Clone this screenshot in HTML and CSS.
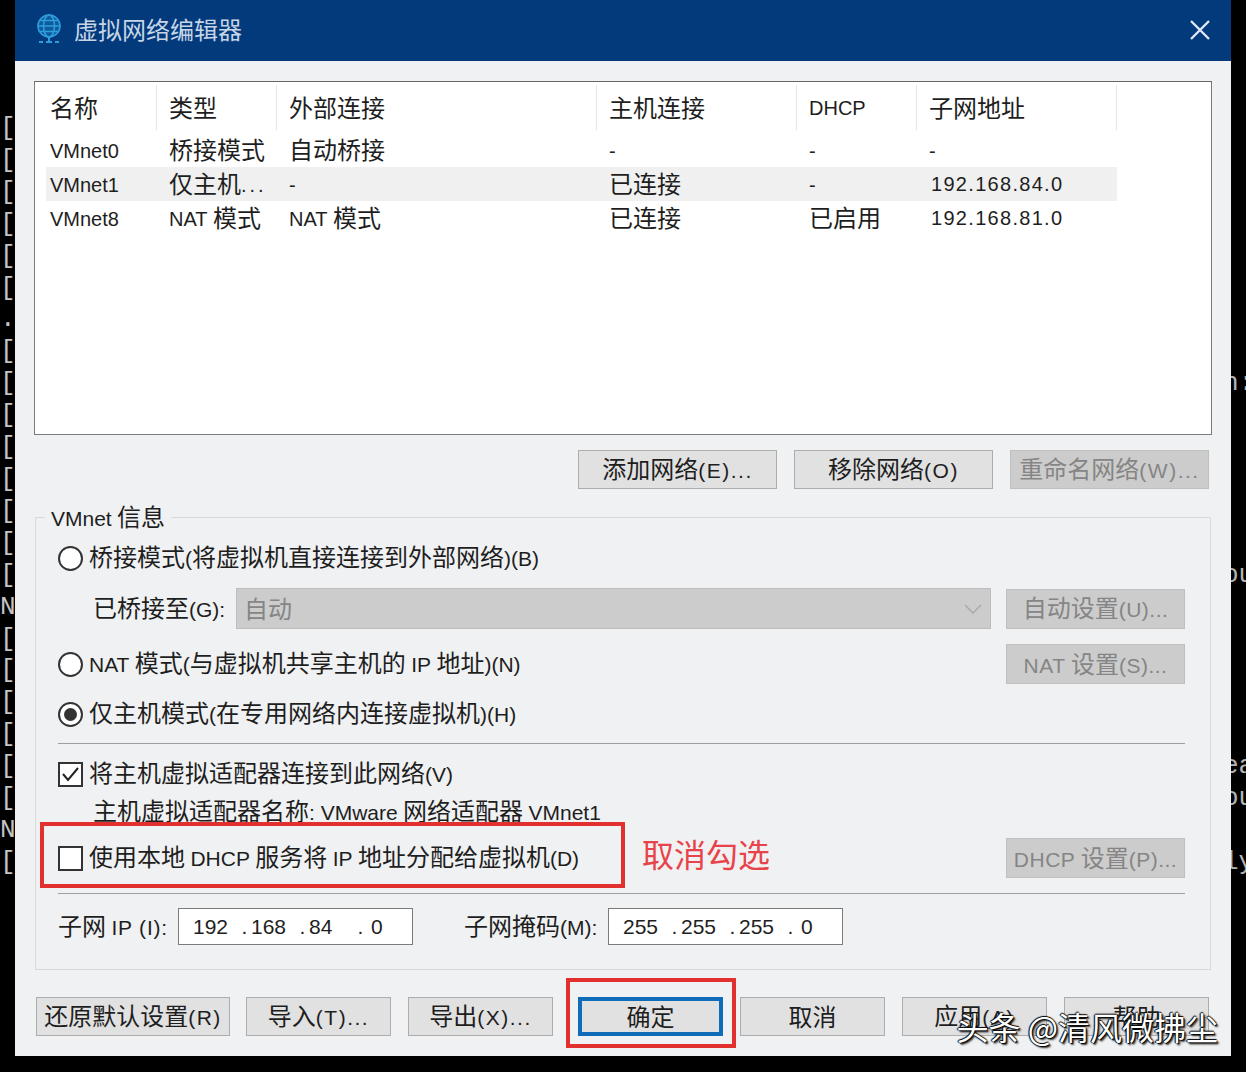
FILE: index.html
```html
<!DOCTYPE html>
<html lang="zh-CN">
<head>
    <meta charset="UTF-8" />
    <title>虚拟网络编辑器</title>
    <link rel="stylesheet" href="styles.css">
</head>
<body>
    <div class="screen">
        <pre class="term term-left">[
[
[
[
[
[
.
[
[
[
[
[
[
[
[
N
[
[
[
[
[
[
N
[</pre>

        <div class="dialog">
            <header class="titlebar">
                <svg class="app-icon" width="26" height="32" viewBox="0 0 26 32" fill="none" stroke="#2f9ddb" stroke-width="1.6">
                    <circle cx="13" cy="12" r="11" fill="#0f5c9c"/>
                    <ellipse cx="13" cy="12" rx="5.5" ry="11"/>
                    <path d="M2 12h22M4 6.5h18M4 17.5h18"/>
                    <path d="M13 23v4M3 28h4M10 28h6M19 28h4" stroke-width="2"/>
                </svg>
                <span class="title">虚拟网络编辑器</span>
                <svg class="close" width="20" height="20" viewBox="0 0 20 20" stroke="#dfe9f2" stroke-width="2.4">
                    <path d="M1 1l18 18M19 1L1 19"/>
                </svg>
            </header>

            <div class="content">
                <div class="listbox">
                    <div class="lv-head">
                        <div class="lv-th first">名称</div>
                        <div class="lv-th">类型</div>
                        <div class="lv-th">外部连接</div>
                        <div class="lv-th">主机连接</div>
                        <div class="lv-th"><span class="en">DHCP</span></div>
                        <div class="lv-th">子网地址</div>
                    </div>
                    <div class="lv-row">
                        <div class="first"><span class="en">VMnet0</span></div>
                        <div>桥接模式</div>
                        <div>自动桥接</div>
                        <div><span class="en">-</span></div>
                        <div><span class="en">-</span></div>
                        <div><span class="en">-</span></div>
                    </div>
                    <div class="lv-row selected">
                        <div class="first"><span class="en">VMnet1</span></div>
                        <div>仅主机<span class="en dots">...</span></div>
                        <div><span class="en">-</span></div>
                        <div>已连接</div>
                        <div><span class="en">-</span></div>
                        <div><span class="en ip">192.168.84.0</span></div>
                    </div>
                    <div class="lv-row">
                        <div class="first"><span class="en">VMnet8</span></div>
                        <div><span class="en">NAT</span> 模式</div>
                        <div><span class="en">NAT</span> 模式</div>
                        <div>已连接</div>
                        <div>已启用</div>
                        <div><span class="en ip">192.168.81.0</span></div>
                    </div>
                </div>

                <div class="net-actions">
                    <button class="btn">添加网络<span class="en">(E)...</span></button>
                    <button class="btn">移除网络<span class="en">(O)</span></button>
                    <button class="btn" disabled>重命名网络<span class="en">(W)...</span></button>
                </div>

                <div class="group">
                    <div class="legend"><span class="en">VMnet</span> 信息</div>

                    <div class="row row-bridge">
                        <span class="radio"></span>
                        <span class="txt">桥接模式<span class="en">(</span>将虚拟机直接连接到外部网络<span class="en">)(B)</span></span>
                    </div>
                    <div class="row row-bridged-to">
                        <span class="txt field-label">已桥接至<span class="en">(G):</span></span>
                        <div class="select">
                            <span>自动</span>
                            <svg width="18" height="10" viewBox="0 0 18 10" fill="none" stroke="#a8a8a8" stroke-width="1.400"><path d="M1 1l8 8 8-8"/></svg>
                        </div>
                        <button class="btn side-btn" disabled>自动设置<span class="en">(U)...</span></button>
                    </div>
                    <div class="row row-nat">
                        <span class="radio"></span>
                        <span class="txt grow"><span class="en">NAT</span> 模式<span class="en">(</span>与虚拟机共享主机的 <span class="en">IP</span> 地址<span class="en">)(N)</span></span>
                        <button class="btn side-btn" disabled><span class="en">NAT</span> 设置<span class="en">(S)...</span></button>
                    </div>
                    <div class="row row-host">
                        <span class="radio checked"></span>
                        <span class="txt">仅主机模式<span class="en">(</span>在专用网络内连接虚拟机<span class="en">)(H)</span></span>
                    </div>

                    <div class="sep sep-a"></div>

                    <div class="row row-adapter">
                        <span class="check">
                            <svg width="21" height="21" viewBox="0 0 21 21" fill="none" stroke="#222" stroke-width="2"><path d="M3 10l5 6 10-12"/></svg>
                        </span>
                        <span class="txt">将主机虚拟适配器连接到此网络<span class="en">(V)</span></span>
                    </div>
                    <div class="row row-adapter-name">
                        <span class="txt">主机虚拟适配器名称<span class="en">: VMware</span> 网络适配器 <span class="en">VMnet1</span></span>
                    </div>
                    <div class="row row-dhcp">
                        <span class="check"></span>
                        <span class="txt grow">使用本地 <span class="en">DHCP</span> 服务将 <span class="en">IP</span> 地址分配给虚拟机<span class="en">(D)</span></span>
                        <button class="btn side-btn" disabled><span class="en">DHCP</span> 设置<span class="en">(P)...</span></button>
                    </div>

                    <div class="sep sep-b"></div>

                    <div class="row row-subnet">
                        <span class="txt subnet-label">子网 <span class="en">IP (I):</span></span>
                        <div class="ip-input"><span>192</span><i>.</i><span>168</span><i>.</i><span>84</span><i>.</i><span>0</span></div>
                        <span class="txt subnet-label mask-label">子网掩码<span class="en">(M):</span></span>
                        <div class="ip-input"><span>255</span><i>.</i><span>255</span><i>.</i><span>255</span><i>.</i><span>0</span></div>
                    </div>
                </div>

                <div class="footer">
                    <button class="btn reset-btn">还原默认设置<span class="en">(R)</span></button>
                    <button class="btn">导入<span class="en">(T)...</span></button>
                    <button class="btn">导出<span class="en">(X)...</span></button>
                    <button class="btn primary">确定</button>
                    <button class="btn">取消</button>
                    <button class="btn">应用<span class="en">(A)</span></button>
                    <button class="btn">帮助</button>
                </div>
            </div>

            <!-- annotations drawn on top of the dialog -->
            <div class="mark mark-dhcp"></div>
            <div class="mark-text">取消勾选</div>
            <div class="mark mark-ok"></div>
            <div class="watermark">头条 @清风微拂尘</div>
        </div>

        <div class="term term-right"><pre>








n:





ou





ea
ou

ly</pre></div>
    </div>
</body>
</html>
```

FILE: styles.css
```css
* {
    margin: 0;
    padding: 0;
    box-sizing: border-box;
}

html, body {
    background-color: #000;
}

body {
    font-family: "Noto Sans CJK SC", "Liberation Sans", sans-serif;
    font-size: 24px;
    line-height: 1.2;
    color: #1e1e1e;
}

.en {
    font-family: "Liberation Sans", "Noto Sans CJK SC", sans-serif;
    font-size: 21px;
}

.txt {
    padding-bottom: 2px;
}

.screen {
    display: flex;
    width: 1246px;
    height: 1072px;
    overflow: hidden;
}

/* Terminal text showing behind the dialog */
.term {
    width: 15px;
    flex-shrink: 0;
    overflow: hidden;
    padding-top: 113px;
    font-family: "Liberation Mono", monospace;
    font-size: 26px;
    line-height: 31.9px;
    color: #c4c4c4;
}

.term-right {
    color: #b4b4b4;
}

.term-right pre {
    margin-left: -8px;
    font: inherit;
}

.dialog {
    position: relative;
    width: 1216px;
    height: 1056px;
    flex-shrink: 0;
    background-color: #f0f1f2;
}

.titlebar {
    display: flex;
    align-items: center;
    height: 61px;
    padding: 0 21px 1px 21px;
    background-color: #033a7c;
}

.app-icon {
    flex-shrink: 0;
}

.title {
    flex: 1;
    margin-left: 12px;
    padding-bottom: 1px;
    color: #c6d6e6;
}

.content {
    padding: 20px 19px 0;
}

/* Network list */
.listbox {
    height: 354px;
    padding-left: 11px;
    background-color: #fff;
    border: 1px solid #7b7b7b;
    border-top-color: #666;
}

.listbox .en {
    font-size: 20px;
    vertical-align: 1px;
}

.lv-head,
.lv-row {
    display: grid;
    grid-template-columns: 111px 120px 320px 200px 120px 200px;
    width: 1071px;
}

.lv-head {
    height: 51px;
    padding-top: 3px;
}

.lv-th {
    display: flex;
    align-items: center;
    height: 45px;
    padding-left: 12px;
    border-right: 1px solid #e6e6e6;
}

.lv-row {
    align-items: center;
    height: 34px;
    padding-bottom: 2px;
}

.lv-row > div {
    padding-left: 12px;
    white-space: nowrap;
}

.lv-th.first,
.lv-row > div.first {
    padding-left: 4px;
}

.lv-row.selected {
    background-color: #f0f0f0;
}

.listbox .dots {
    letter-spacing: 3px;
}

.listbox .ip {
    margin-left: 2px;
    letter-spacing: 1.300px;
    vertical-align: 2px;
}

/* Buttons */
.btn {
    width: 199px;
    height: 39px;
    padding-bottom: 2px;
    font-family: inherit;
    font-size: 24px;
    line-height: 1;
    white-space: nowrap;
    color: #1e1e1e;
    background-color: #e1e1e1;
    border: 1px solid #adadad;
}

.btn .en {
    letter-spacing: 1.500px;
}

.btn:disabled {
    color: #858585;
    background-color: #cccccc;
    border-color: #bfbfbf;
}

.net-actions {
    display: flex;
    justify-content: flex-end;
    gap: 17px;
    margin-top: 15px;
    padding-right: 3px;
}

/* VMnet info group */
.group {
    position: relative;
    height: 453px;
    margin: 28px 1px 0;
    padding: 20px 25px 0 22px;
    border: 1px solid #d9d9d9;
}

.legend {
    position: absolute;
    top: -16px;
    left: 9px;
    padding: 0 6px;
    background-color: #f0f1f2;
}

.row {
    display: flex;
    align-items: center;
    white-space: nowrap;
}

.grow {
    flex: 1;
}

.radio,
.check {
    display: flex;
    align-items: center;
    justify-content: center;
    width: 25px;
    height: 25px;
    margin-right: 6px;
    flex-shrink: 0;
    background-color: #fff;
    border: 2px solid #333;
}

.radio {
    border-radius: 50%;
}

.radio.checked::after {
    content: "";
    width: 13px;
    height: 13px;
    border-radius: 50%;
    background-color: #333;
}

.row-bridge {
    height: 40px;
}

.row-bridged-to {
    height: 41px;
    margin-top: 10px;
    padding-left: 35px;
}

.field-label {
    width: 143px;
    flex-shrink: 0;
}

.select {
    display: flex;
    align-items: center;
    justify-content: space-between;
    width: 755px;
    height: 41px;
    margin-right: 15px;
    padding: 0 8px 0 7px;
    color: #858585;
    background-color: #cccccc;
    border: 1px solid #bdbdbd;
}

.side-btn {
    width: 179px;
    height: 40px;
    flex-shrink: 0;
}

.side-btn .en {
    letter-spacing: 0.500px;
}

.row-nat {
    height: 40px;
    margin-top: 15px;
}

.row-host {
    height: 40px;
    margin-top: 10px;
}

.sep {
    height: 1px;
    background-color: #9e9e9e;
}

.sep-a {
    margin-top: 9px;
}

.row-adapter {
    height: 40px;
    margin-top: 10px;
}

.row-adapter-name {
    height: 36px;
    padding-left: 35px;
}

.row-dhcp {
    height: 40px;
    margin-top: 8px;
}

.sep-b {
    margin-top: 15px;
}

.row-subnet {
    height: 37px;
    margin-top: 14px;
}

.subnet-label {
    width: 120px;
    flex-shrink: 0;
}

.subnet-label .en {
    letter-spacing: 0.800px;
}

.mask-label {
    width: 144px;
    margin-left: 51px;
}

.mask-label .en {
    letter-spacing: 0;
}

.ip-input {
    display: flex;
    align-items: center;
    width: 235px;
    height: 37px;
    padding-left: 14px;
    font-family: "Liberation Sans", sans-serif;
    font-size: 21px;
    background-color: #fff;
    border: 1px solid #7b7b7b;
}

.ip-input span {
    width: 45px;
}

.ip-input span:last-child {
    padding-left: 4px;
}

.ip-input i {
    width: 13px;
    font-style: normal;
    text-align: center;
}

/* Bottom buttons */
.footer {
    display: flex;
    gap: 17px;
    margin: 27px 3px 0 2px;
}

.footer .btn {
    width: 145px;
}

.footer .reset-btn {
    width: 194px;
    margin-right: -1px;
}

.footer .primary {
    margin-left: 8px;
    border: 4px solid #0f6cb8;
}

/* Red annotations and watermark, over the dialog */
.mark {
    position: absolute;
    border: 4px solid #e2302f;
}

.mark-dhcp {
    top: 822px;
    left: 25px;
    width: 585px;
    height: 66px;
}

.mark-ok {
    top: 978px;
    left: 551px;
    width: 170px;
    height: 70px;
}

.mark-text {
    position: absolute;
    top: 834px;
    left: 627px;
    font-size: 32px;
    color: #e8434a;
}

.watermark {
    position: absolute;
    top: 1007px;
    right: 13px;
    font-size: 32px;
    white-space: nowrap;
    color: #fff;
    text-shadow: 1px 1px 1px #000, -1px 0 1px #000, 0 -1px 1px #000, 2px 2px 2px #333;
}
```
